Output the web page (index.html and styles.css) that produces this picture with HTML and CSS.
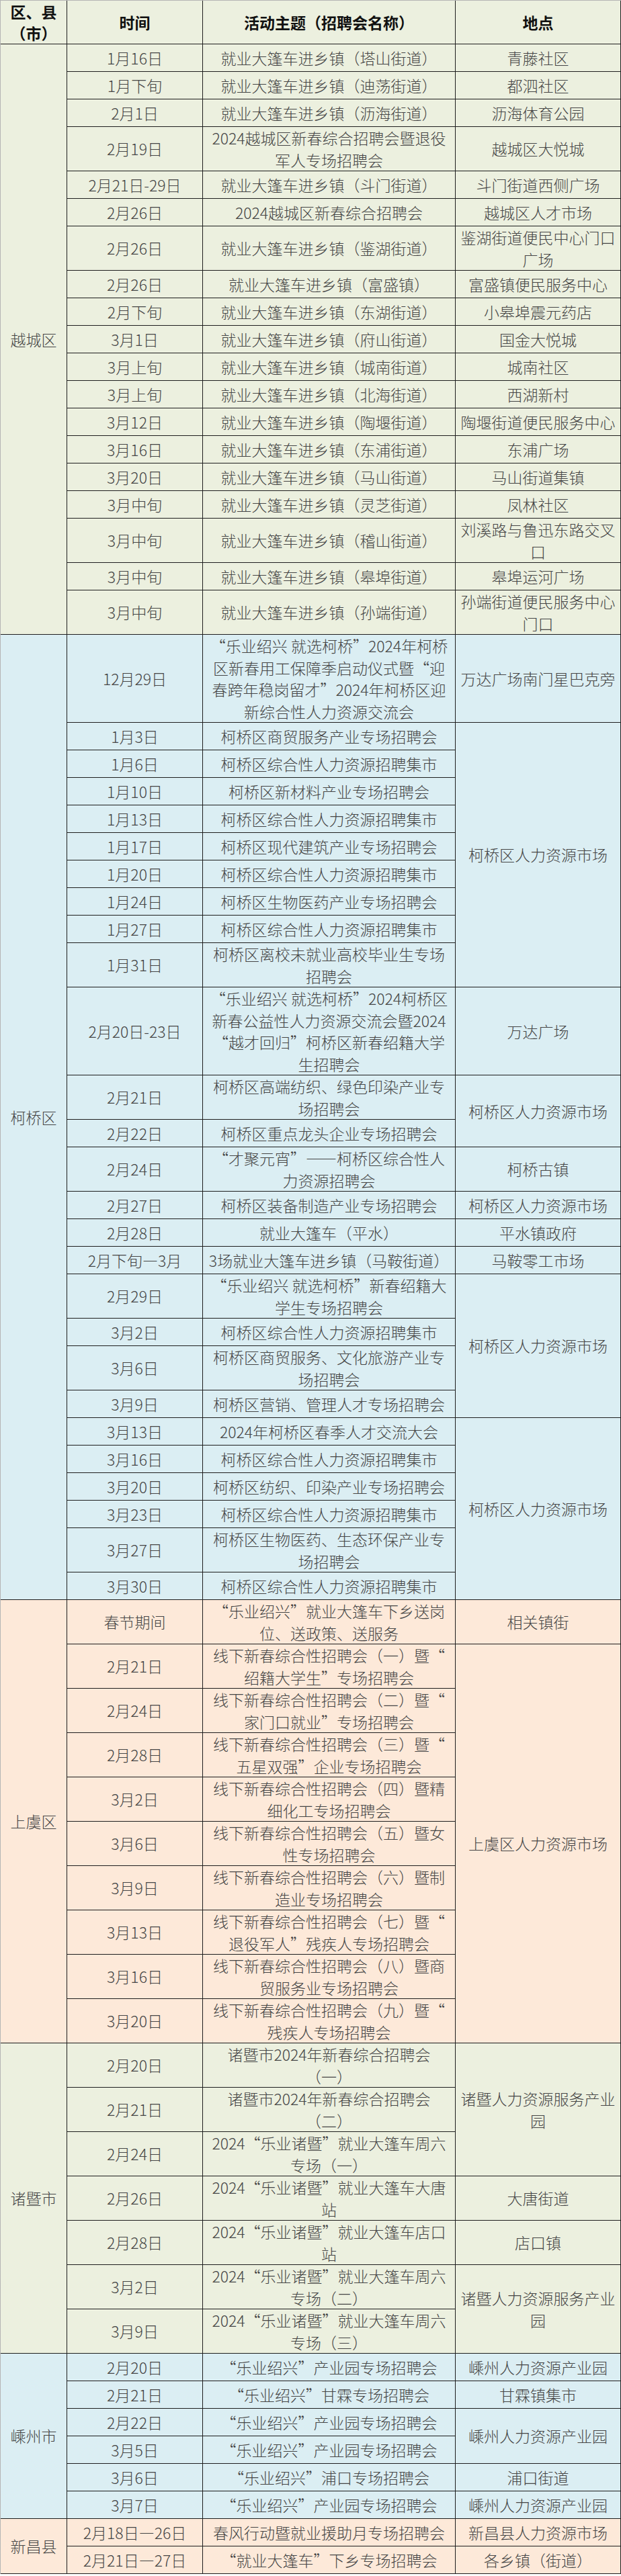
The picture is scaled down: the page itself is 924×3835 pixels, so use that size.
FILE: index.html
```html
<!DOCTYPE html>
<html lang="zh-CN">
<head>
<meta charset="utf-8">
<title>招聘会安排</title>
<link rel="stylesheet" href="styles.css">
</head>
<body>
<table class="schedule">
  <colgroup>
    <col class="c-area">
    <col class="c-time">
    <col class="c-topic">
    <col class="c-place">
  </colgroup>
  <thead class="g">
    <tr>
      <th>区、县<br>（市）</th>
      <th>时间</th>
      <th>活动主题（招聘会名称）</th>
      <th>地点</th>
    </tr>
  </thead>
  <tbody class="g">
    <tr><td rowspan="19">越城区</td><td>1月16日</td><td>就业大篷车进乡镇（塔山街道）</td><td>青藤社区</td></tr>
    <tr><td>1月下旬</td><td>就业大篷车进乡镇（迪荡街道）</td><td>都泗社区</td></tr>
    <tr><td>2月1日</td><td>就业大篷车进乡镇（沥海街道）</td><td>沥海体育公园</td></tr>
    <tr><td>2月19日</td><td>2024越城区新春综合招聘会暨退役<br>军人专场招聘会</td><td>越城区大悦城</td></tr>
    <tr><td>2月21日-29日</td><td>就业大篷车进乡镇（斗门街道）</td><td>斗门街道西侧广场</td></tr>
    <tr><td>2月26日</td><td>2024越城区新春综合招聘会</td><td>越城区人才市场</td></tr>
    <tr><td>2月26日</td><td>就业大篷车进乡镇（鉴湖街道）</td><td>鉴湖街道便民中心门口<br>广场</td></tr>
    <tr><td>2月26日</td><td>就业大篷车进乡镇（富盛镇）</td><td>富盛镇便民服务中心</td></tr>
    <tr><td>2月下旬</td><td>就业大篷车进乡镇（东湖街道）</td><td>小皋埠震元药店</td></tr>
    <tr><td>3月1日</td><td>就业大篷车进乡镇（府山街道）</td><td>国金大悦城</td></tr>
    <tr><td>3月上旬</td><td>就业大篷车进乡镇（城南街道）</td><td>城南社区</td></tr>
    <tr><td>3月上旬</td><td>就业大篷车进乡镇（北海街道）</td><td>西湖新村</td></tr>
    <tr><td>3月12日</td><td>就业大篷车进乡镇（陶堰街道）</td><td>陶堰街道便民服务中心</td></tr>
    <tr><td>3月16日</td><td>就业大篷车进乡镇（东浦街道）</td><td>东浦广场</td></tr>
    <tr><td>3月20日</td><td>就业大篷车进乡镇（马山街道）</td><td>马山街道集镇</td></tr>
    <tr><td>3月中旬</td><td>就业大篷车进乡镇（灵芝街道）</td><td>凤林社区</td></tr>
    <tr><td>3月中旬</td><td>就业大篷车进乡镇（稽山街道）</td><td>刘溪路与鲁迅东路交叉<br>口</td></tr>
    <tr><td>3月中旬</td><td>就业大篷车进乡镇（皋埠街道）</td><td>皋埠运河广场</td></tr>
    <tr><td>3月中旬</td><td>就业大篷车进乡镇（孙端街道）</td><td>孙端街道便民服务中心<br>门口</td></tr>
  </tbody>
  <tbody class="b">
    <tr><td rowspan="27">柯桥区</td><td>12月29日</td><td>“乐业绍兴 就选柯桥”2024年柯桥<br>区新春用工保障季启动仪式暨“迎<br>春跨年稳岗留才”2024年柯桥区迎<br>新综合性人力资源交流会</td><td>万达广场南门星巴克旁</td></tr>
    <tr><td>1月3日</td><td>柯桥区商贸服务产业专场招聘会</td><td rowspan="9">柯桥区人力资源市场</td></tr>
    <tr><td>1月6日</td><td>柯桥区综合性人力资源招聘集市</td></tr>
    <tr><td>1月10日</td><td>柯桥区新材料产业专场招聘会</td></tr>
    <tr><td>1月13日</td><td>柯桥区综合性人力资源招聘集市</td></tr>
    <tr><td>1月17日</td><td>柯桥区现代建筑产业专场招聘会</td></tr>
    <tr><td>1月20日</td><td>柯桥区综合性人力资源招聘集市</td></tr>
    <tr><td>1月24日</td><td>柯桥区生物医药产业专场招聘会</td></tr>
    <tr><td>1月27日</td><td>柯桥区综合性人力资源招聘集市</td></tr>
    <tr><td>1月31日</td><td>柯桥区离校未就业高校毕业生专场<br>招聘会</td></tr>
    <tr><td>2月20日-23日</td><td>“乐业绍兴 就选柯桥”2024柯桥区<br>新春公益性人力资源交流会暨2024<br>“越才回归”柯桥区新春绍籍大学<br>生招聘会</td><td>万达广场</td></tr>
    <tr><td>2月21日</td><td>柯桥区高端纺织、绿色印染产业专<br>场招聘会</td><td rowspan="2">柯桥区人力资源市场</td></tr>
    <tr><td>2月22日</td><td>柯桥区重点龙头企业专场招聘会</td></tr>
    <tr><td>2月24日</td><td>“才聚元宵”——柯桥区综合性人<br>力资源招聘会</td><td>柯桥古镇</td></tr>
    <tr><td>2月27日</td><td>柯桥区装备制造产业专场招聘会</td><td>柯桥区人力资源市场</td></tr>
    <tr><td>2月28日</td><td>就业大篷车（平水）</td><td>平水镇政府</td></tr>
    <tr><td>2月下旬—3月</td><td>3场就业大篷车进乡镇（马鞍街道）</td><td>马鞍零工市场</td></tr>
    <tr><td>2月29日</td><td>“乐业绍兴 就选柯桥”新春绍籍大<br>学生专场招聘会</td><td rowspan="4">柯桥区人力资源市场</td></tr>
    <tr><td>3月2日</td><td>柯桥区综合性人力资源招聘集市</td></tr>
    <tr><td>3月6日</td><td>柯桥区商贸服务、文化旅游产业专<br>场招聘会</td></tr>
    <tr><td>3月9日</td><td>柯桥区营销、管理人才专场招聘会</td></tr>
    <tr><td>3月13日</td><td>2024年柯桥区春季人才交流大会</td><td rowspan="6">柯桥区人力资源市场</td></tr>
    <tr><td>3月16日</td><td>柯桥区综合性人力资源招聘集市</td></tr>
    <tr><td>3月20日</td><td>柯桥区纺织、印染产业专场招聘会</td></tr>
    <tr><td>3月23日</td><td>柯桥区综合性人力资源招聘集市</td></tr>
    <tr><td>3月27日</td><td>柯桥区生物医药、生态环保产业专<br>场招聘会</td></tr>
    <tr><td>3月30日</td><td>柯桥区综合性人力资源招聘集市</td></tr>
  </tbody>
  <tbody class="p">
    <tr><td rowspan="10">上虞区</td><td>春节期间</td><td>“乐业绍兴”就业大篷车下乡送岗<br>位、送政策、送服务</td><td>相关镇街</td></tr>
    <tr><td>2月21日</td><td>线下新春综合性招聘会（一）暨“<br>绍籍大学生”专场招聘会</td><td rowspan="9">上虞区人力资源市场</td></tr>
    <tr><td>2月24日</td><td>线下新春综合性招聘会（二）暨“<br>家门口就业”专场招聘会</td></tr>
    <tr><td>2月28日</td><td>线下新春综合性招聘会（三）暨“<br>五星双强”企业专场招聘会</td></tr>
    <tr><td>3月2日</td><td>线下新春综合性招聘会（四）暨精<br>细化工专场招聘会</td></tr>
    <tr><td>3月6日</td><td>线下新春综合性招聘会（五）暨女<br>性专场招聘会</td></tr>
    <tr><td>3月9日</td><td>线下新春综合性招聘会（六）暨制<br>造业专场招聘会</td></tr>
    <tr><td>3月13日</td><td>线下新春综合性招聘会（七）暨“<br>退役军人”残疾人专场招聘会</td></tr>
    <tr><td>3月16日</td><td>线下新春综合性招聘会（八）暨商<br>贸服务业专场招聘会</td></tr>
    <tr><td>3月20日</td><td>线下新春综合性招聘会（九）暨“<br>残疾人专场招聘会</td></tr>
  </tbody>
  <tbody class="g">
    <tr><td rowspan="7">诸暨市</td><td>2月20日</td><td>诸暨市2024年新春综合招聘会<br>（一）</td><td rowspan="3">诸暨人力资源服务产业<br>园</td></tr>
    <tr><td>2月21日</td><td>诸暨市2024年新春综合招聘会<br>（二）</td></tr>
    <tr><td>2月24日</td><td>2024“乐业诸暨”就业大篷车周六<br>专场（一）</td></tr>
    <tr><td>2月26日</td><td>2024“乐业诸暨”就业大篷车大唐<br>站</td><td>大唐街道</td></tr>
    <tr><td>2月28日</td><td>2024“乐业诸暨”就业大篷车店口<br>站</td><td>店口镇</td></tr>
    <tr><td>3月2日</td><td>2024“乐业诸暨”就业大篷车周六<br>专场（二）</td><td rowspan="2">诸暨人力资源服务产业<br>园</td></tr>
    <tr><td>3月9日</td><td>2024“乐业诸暨”就业大篷车周六<br>专场（三）</td></tr>
  </tbody>
  <tbody class="b">
    <tr><td rowspan="6">嵊州市</td><td>2月20日</td><td>“乐业绍兴”产业园专场招聘会</td><td>嵊州人力资源产业园</td></tr>
    <tr><td>2月21日</td><td>“乐业绍兴”甘霖专场招聘会</td><td>甘霖镇集市</td></tr>
    <tr><td>2月22日</td><td>“乐业绍兴”产业园专场招聘会</td><td rowspan="2">嵊州人力资源产业园</td></tr>
    <tr><td>3月5日</td><td>“乐业绍兴”产业园专场招聘会</td></tr>
    <tr><td>3月6日</td><td>“乐业绍兴”浦口专场招聘会</td><td>浦口街道</td></tr>
    <tr><td>3月7日</td><td>“乐业绍兴”产业园专场招聘会</td><td>嵊州人力资源产业园</td></tr>
  </tbody>
  <tbody class="p">
    <tr><td rowspan="2">新昌县</td><td>2月18日—26日</td><td>春风行动暨就业援助月专场招聘会</td><td>新昌县人力资源市场</td></tr>
    <tr><td>2月21日—27日</td><td>“就业大篷车”下乡专场招聘会</td><td>各乡镇（街道）</td></tr>
  </tbody>
</table>
</body>
</html>
```

FILE: styles.css
```css
html, body {
  margin: 0;
  padding: 0;
  background: #ffffff;
}

body {
  font-family: "Noto Sans CJK SC", "Noto Sans", sans-serif;
}

.schedule {
  width: 924px;
  table-layout: fixed;
  border-collapse: separate;
  border-spacing: 0;
  border-top: 1px solid #b5b5b5;
  border-left: 1px solid #b5b5b5;
  font-size: 23px;
  line-height: 32.5px;
  color: #454545;
}

.c-area { width: 99px; }
.c-time { width: 202px; }
.c-topic { width: 376px; }
.c-place { width: 246px; }

.schedule th,
.schedule td {
  border-right: 1px solid #1e1e1e;
  border-bottom: 1px solid #1e1e1e;
  padding: 0 3px;
  text-align: center;
  vertical-align: middle;
  white-space: nowrap;
}

.schedule thead tr {
  height: 65px;
}

.schedule th {
  font-weight: 700;
  color: #111111;
  line-height: 32px;
}

.schedule tbody tr {
  height: 41px;
}

.schedule td {
  font-weight: 300;
}

.g { background: #ecf0df; }
.b { background: #dbeef3; }
.p { background: #fde9d9; }
```
